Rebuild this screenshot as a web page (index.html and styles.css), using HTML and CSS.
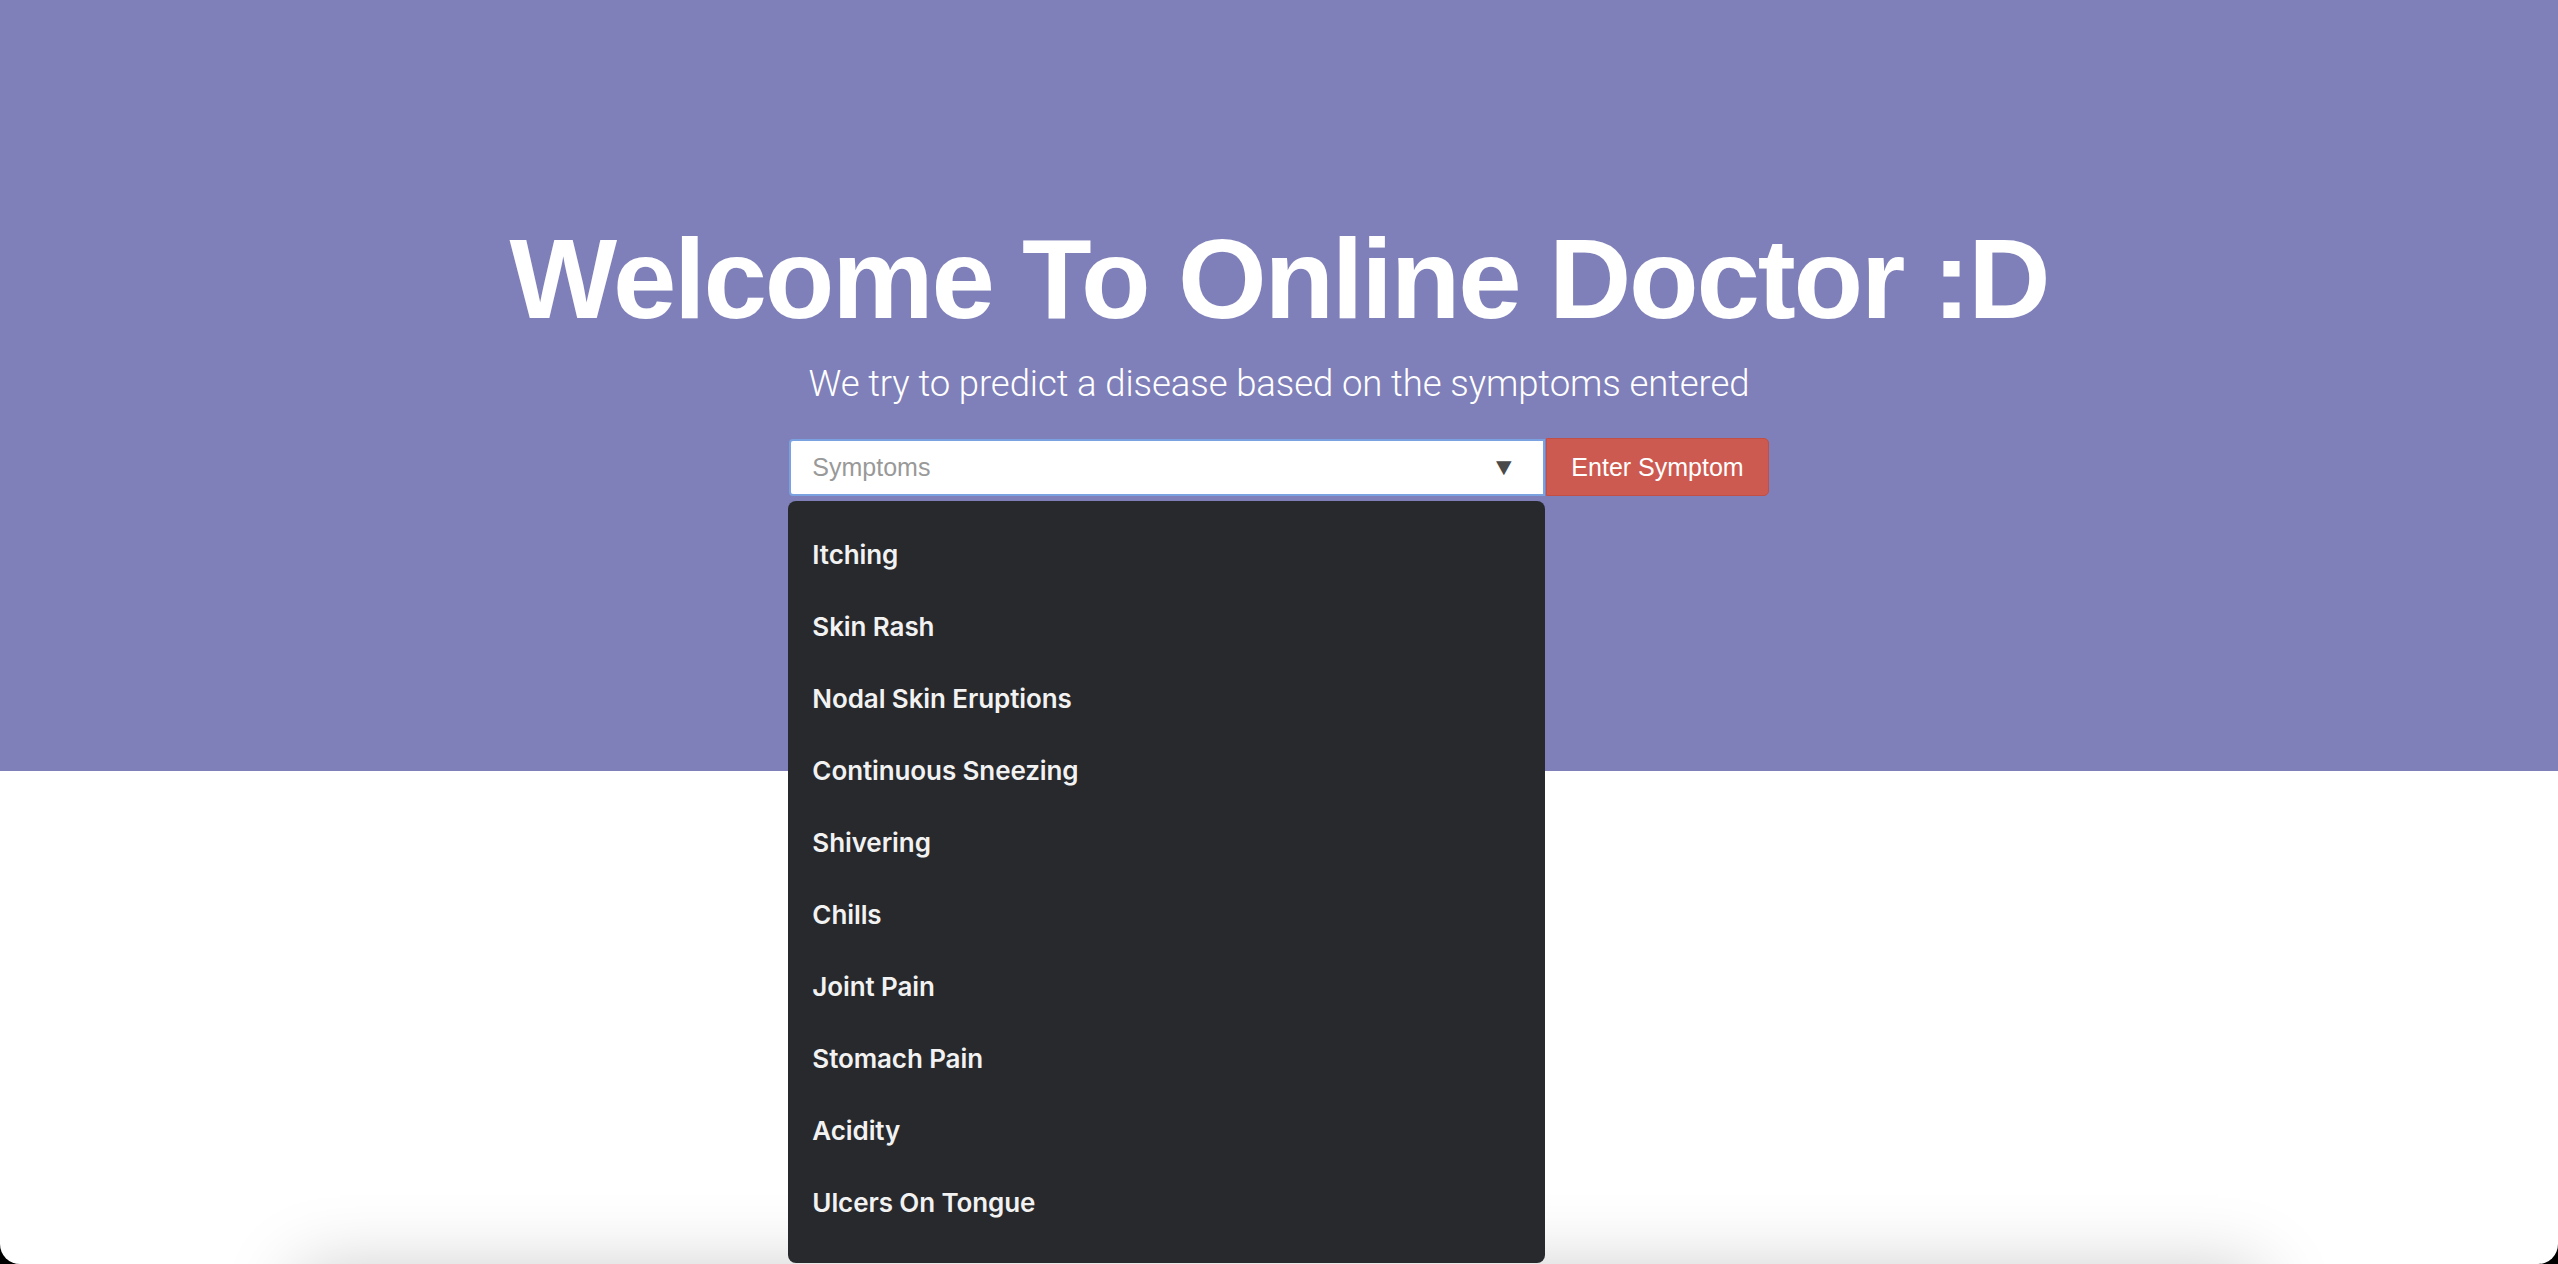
FILE: index.html
```html
<!DOCTYPE html>
<html lang="en">
<head>
<meta charset="utf-8">
<title>Online Doctor</title>
<link rel="stylesheet" href="styles.css">
</head>
<body>
<div class="window">
  <header class="hero">
    <h1 class="hero-title">Welcome To Online Doctor :D</h1>
    <p class="hero-sub">We try to predict a disease based on the symptoms entered</p>
    <div class="search-row">
      <div class="select-wrap">
        <div class="select-box">
          <span class="placeholder">Symptoms</span>
          <span class="caret">&#9660;</span>
        </div>
        <ul class="dropdown">
          <li>Itching</li>
          <li>Skin Rash</li>
          <li>Nodal Skin Eruptions</li>
          <li>Continuous Sneezing</li>
          <li>Shivering</li>
          <li>Chills</li>
          <li>Joint Pain</li>
          <li>Stomach Pain</li>
          <li>Acidity</li>
          <li>Ulcers On Tongue</li>
        </ul>
      </div>
      <button class="btn-enter" type="button">Enter Symptom</button>
    </div>
  </header>
  <section class="results">
    <div class="results-card"></div>
  </section>
</div>
</body>
</html>
```

FILE: styles.css
```css
html {
  background: #000;
}
body {
  margin: 0;
  font-family: "Liberation Sans", Arial, sans-serif;
}
.window {
  height: 1264px;
  overflow: hidden;
  background: #fff;
  border-radius: 0 0 20px 20px;
}
.hero {
  height: 771px;
  box-sizing: border-box;
  background: #7f80b9;
  padding-top: 223px;
  display: flex;
  flex-direction: column;
  align-items: center;
  color: #fff;
}
.hero-title {
  margin: 0;
  font-family: "Liberation Sans", Arial, sans-serif;
  font-weight: 700;
  font-size: 114px;
  line-height: 112px;
  letter-spacing: -2.2px;
}
.hero-sub {
  margin: 29px 0 0;
  font-family: Roboto, "Liberation Sans", sans-serif;
  font-weight: 300;
  font-size: 36.5px;
  line-height: 40px;
  letter-spacing: -0.1px;
}
.search-row {
  margin-top: 34px;
  display: flex;
  align-items: center;
  gap: 1px;
}
.select-wrap {
  position: relative;
}
.select-box {
  width: 756px;
  height: 57px;
  box-sizing: border-box;
  background: #fff;
  border: 2px solid #7aa2e0;
  border-radius: 4px 0 0 4px;
  display: flex;
  align-items: center;
  justify-content: space-between;
  padding: 0 28px 0 21px;
}
.placeholder {
  font-size: 25px;
  color: #999;
}
.caret {
  font-size: 24px;
  color: #4a4a4a;
  transform: scaleX(1.1);
}
.dropdown {
  position: absolute;
  top: 62px;
  left: -1px;
  width: 757px;
  margin: 0;
  padding: 18px 0 24px;
  box-sizing: border-box;
  list-style: none;
  background: #28292d;
  border-radius: 8px;
  z-index: 5;
}
.dropdown li {
  height: 72px;
  display: flex;
  align-items: center;
  padding-left: 24px;
  font-family: Inter, "Liberation Sans", sans-serif;
  font-weight: 600;
  font-size: 26px;
  letter-spacing: -0.1px;
  color: #f2f2f2;
}
.btn-enter {
  height: 58px;
  padding: 0 24px;
  background: #cd5a50;
  border: 1px solid #c24f47;
  border-radius: 0 5px 5px 0;
  color: #fff;
  font-family: "Liberation Sans", Arial, sans-serif;
  font-size: 25px;
}
.results {
  padding-top: 500px;
}
.results-card {
  width: 1960px;
  height: 400px;
  margin: 0 auto;
  background: #fff;
  box-shadow: 0 0 70px rgba(0, 0, 0, 0.22);
}
```
